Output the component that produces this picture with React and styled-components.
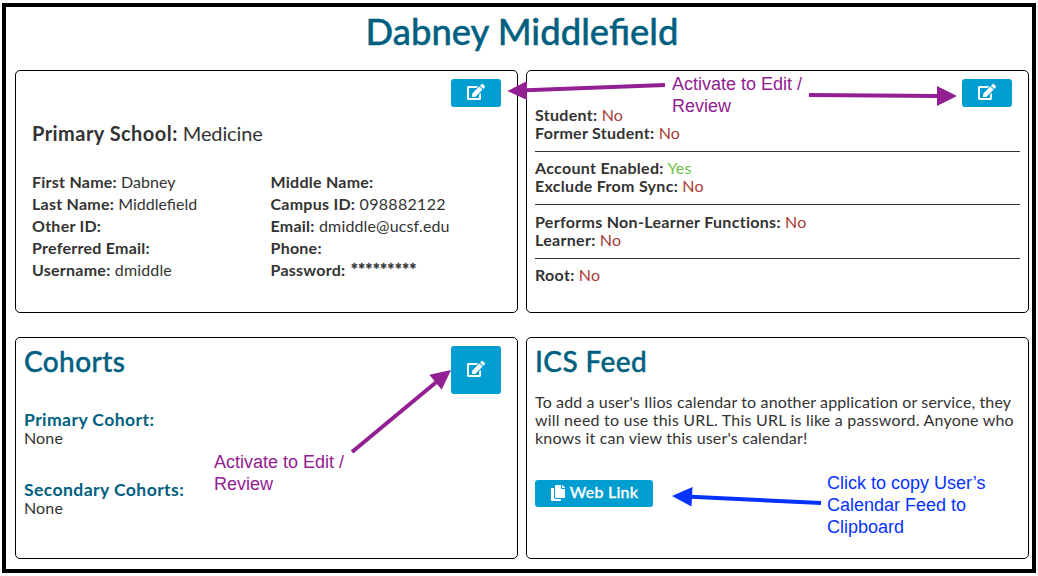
import React from "react";
import styled, { createGlobalStyle } from "styled-components";
import { FaEdit, FaCopy } from "react-icons/fa";

const GlobalStyle = createGlobalStyle`
  *, *::before, *::after { box-sizing: border-box; }
  body {
    margin: 0;
    background: #fff;
    color: #333;
    font-family: Lato, "Open Sans", sans-serif;
    font-size: 16px;
    line-height: 18px;
  }
  h1, h2, h3, p, ul { margin: 0; padding: 0; }
  ul { list-style: none; }
`;

const Page = styled.div`
  position: relative;
  width: 1038px;
  height: 576px;
  padding: 3px 2px;
  overflow: hidden;
  border-right: 2px solid #f4f4f4;
`;

const Frame = styled.main`
  width: 1034px;
  height: 570px;
  border: 4px solid #000;
  padding: 0 3px 0 9px;
`;

const Title = styled.h1`
  height: 63px;
  padding: 2px 0 0;
  text-align: center;
  font-size: 36.4px;
  line-height: 44px;
  font-weight: 500;
  -webkit-text-stroke: 0.4px #006080;
  color: #006080;
`;

const Cards = styled.div`
  display: grid;
  grid-template-columns: 503px 503px;
  grid-template-rows: 243px 222px;
  gap: 24px 8px;
`;

const Card = styled.section`
  display: flex;
  flex-direction: column;
  border: 1px solid #000;
  border-radius: 5px;
  padding: 8px;
`;

const CardHeader = styled.header`
  display: flex;
  justify-content: space-between;
  align-items: flex-start;
  height: ${(p) => p.$height}px;
  padding-right: 8px;
`;

const Heading = styled.h2`
  font-size: 28px;
  line-height: 30px;
  font-weight: 500;
  letter-spacing: 0.4px;
  -webkit-text-stroke: 0.4px #006080;
  color: #006080;
`;

const Button = styled.button`
  display: flex;
  align-items: center;
  justify-content: center;
  gap: 4px;
  width: ${(p) => p.$width || 50}px;
  height: ${(p) => p.$height || 28}px;
  padding: 0 0 2px;
  margin-left: ${(p) => (p.$start ? 0 : "auto")};
  border: 0;
  border-radius: 3px;
  background: #009dd1;
  color: #fff;
  font: 500 16px/18px Lato, sans-serif;
  letter-spacing: 0.25px;
`;

const ButtonLabel = styled.span`
  padding-bottom: 2px;
  -webkit-text-stroke: 0.3px #fff;
`;

const School = styled.p`
  padding-left: 8px;
  margin-top: -1px;
  font-size: 20px;
  line-height: 24px;
  letter-spacing: -0.12px;
`;

const Label = styled.b`
  letter-spacing: ${(p) => (p.$track === undefined ? 0.3 : p.$track)}px;
`;

const Details = styled.div`
  display: grid;
  grid-template-columns: 238.5px 1fr;
  padding: 26px 0 0 8px;
  line-height: 22px;
`;

const Field = styled.li`
  height: 22px;
  white-space: nowrap;
  letter-spacing: ${(p) => (p.$track === undefined ? 0.15 : p.$track)}px;
`;

const Flags = styled.li`
  letter-spacing: 0.15px;
`;

const Mask = styled.b`
  margin-left: 1px;
  font-size: 17px;
  letter-spacing: 0.1px;
  -webkit-text-stroke: 0.3px #333;
`;

const Group = styled.ul`
  padding: ${(p) => p.$top}px 0 9px;
  border-bottom: ${(p) => (p.$last ? "0" : "1px solid #333")};
`;

const Flag = styled.span`
  color: ${(p) => (p.$on ? "#6fbf44" : "#a93c38")};
`;

const Cohort = styled.div`
  height: 70px;
`;

const CohortTitle = styled.h3`
  font-size: 17.6px;
  line-height: 20px;
  height: 19px;
  font-weight: 700;
  letter-spacing: 0.4px;
  color: #006080;
`;

const Text = styled.p`
  letter-spacing: ${(p) => (p.$track === undefined ? 0.15 : p.$track)}px;
  white-space: nowrap;
`;

const FeedText = styled.div`
  height: 87px;
`;

const Overlay = styled.svg`
  position: absolute;
  inset: 0;
  pointer-events: none;
`;

const Note = styled.div`
  position: absolute;
  left: ${(p) => p.$x}px;
  top: ${(p) => p.$y}px;
  color: ${(p) => p.$color};
  font: 18px/22px "Liberation Sans", Arial, sans-serif;
  white-space: pre-line;
`;

const PURPLE = "#932092";
const BLUE = "#0433ff";

const personal = [
  [
    { label: "First Name:", value: "Dabney", track: 0 },
    { label: "Last Name:", value: "Middlefield", track: 0 },
    { label: "Other ID:" },
    { label: "Preferred Email:" },
    { label: "Username:", value: "dmiddle" },
  ],
  [
    { label: "Middle Name:" },
    { label: "Campus ID:", value: "098882122", track: 0.3 },
    { label: "Email:", value: "dmiddle@ucsf.edu" },
    { label: "Phone:" },
    { label: "Password:", value: <Mask>*********</Mask> },
  ],
];

const permissions = [
  { top: 0, rows: [["Student:", false], ["Former Student:", false]] },
  { top: 7, rows: [["Account Enabled:", true], ["Exclude From Sync:", false]] },
  { top: 8, rows: [["Performs Non-Learner Functions:", false], ["Learner:", false]] },
  { top: 7, rows: [["Root:", false]] },
];

function EditButton({ height }) {
  return (
    <Button $height={height} aria-label="Edit">
      <FaEdit size={18} />
    </Button>
  );
}

function Arrow({ color, line, head }) {
  return (
    <g fill={color} stroke={color}>
      <path d={line} strokeWidth="4" />
      <path d={head} stroke="none" />
    </g>
  );
}

export default function App() {
  return (
    <Page>
      <GlobalStyle />
      <Frame>
        <Title>Dabney Middlefield</Title>
        <Cards>
          <Card>
            <CardHeader $height={43}>
              <EditButton />
            </CardHeader>
            <School>
              <Label $track={0.45}>Primary School:</Label> Medicine
            </School>
            <Details>
              {personal.map((column, i) => (
                <ul key={i}>
                  {column.map(({ label, value, track }) => (
                    <Field key={label} $track={track}>
                      <Label $track={0.25}>{label}</Label> {value}
                    </Field>
                  ))}
                </ul>
              ))}
            </Details>
          </Card>
          <Card>
            <CardHeader $height={27}>
              <EditButton />
            </CardHeader>
            {permissions.map((group, i) => (
              <Group key={i} $top={group.top} $last={i === permissions.length - 1}>
                {group.rows.map(([label, on]) => (
                  <Flags key={label}>
                    <Label>{label}</Label> <Flag $on={on}>{on ? "Yes" : "No"}</Flag>
                  </Flags>
                ))}
              </Group>
            ))}
          </Card>
          <Card>
            <CardHeader $height={64}>
              <Heading>Cohorts</Heading>
              <EditButton height={48} />
            </CardHeader>
            <Cohort>
              <CohortTitle>Primary Cohort:</CohortTitle>
              <Text>None</Text>
            </Cohort>
            <Cohort>
              <CohortTitle>Secondary Cohorts:</CohortTitle>
              <Text>None</Text>
            </Cohort>
          </Card>
          <Card>
            <CardHeader $height={47}>
              <Heading>ICS Feed</Heading>
            </CardHeader>
            <FeedText>
              <Text $track={0.13}>To add a user's Ilios calendar to another application or service, they</Text>
              <Text $track={0.21}>will need to use this URL. This URL is like a password. Anyone who</Text>
              <Text $track={0.17}>knows it can view this user's calendar!</Text>
            </FeedText>
            <Button $width={118} $height={27} $start>
              <FaCopy size={16} />
              <ButtonLabel>Web Link</ButtonLabel>
            </Button>
          </Card>
        </Cards>
      </Frame>
      <Overlay width="1038" height="576" viewBox="0 0 1038 576">
        <Arrow color={PURPLE} line="M665 85L526 90.3" head="M507.5 91L527 81V100Z" />
        <Arrow color={PURPLE} line="M809 95L938 96" head="M957 96L937 86V106Z" />
        <Arrow color={PURPLE} line="M352 452L437 381.5" head="M451 370L429.3 374.7L441.7 389.7Z" />
        <Arrow color={BLUE} line="M821 503L691 496.7" head="M672 496L692.5 487L691.5 506.5Z" />
      </Overlay>
      <Note $x={672} $y={73} $color={PURPLE}>{"Activate to Edit /\nReview"}</Note>
      <Note $x={214} $y={451} $color={PURPLE}>{"Activate to Edit /\nReview"}</Note>
      <Note $x={827} $y={472} $color={BLUE}>{"Click to copy User’s\nCalendar Feed to\nClipboard"}</Note>
    </Page>
  );
}
